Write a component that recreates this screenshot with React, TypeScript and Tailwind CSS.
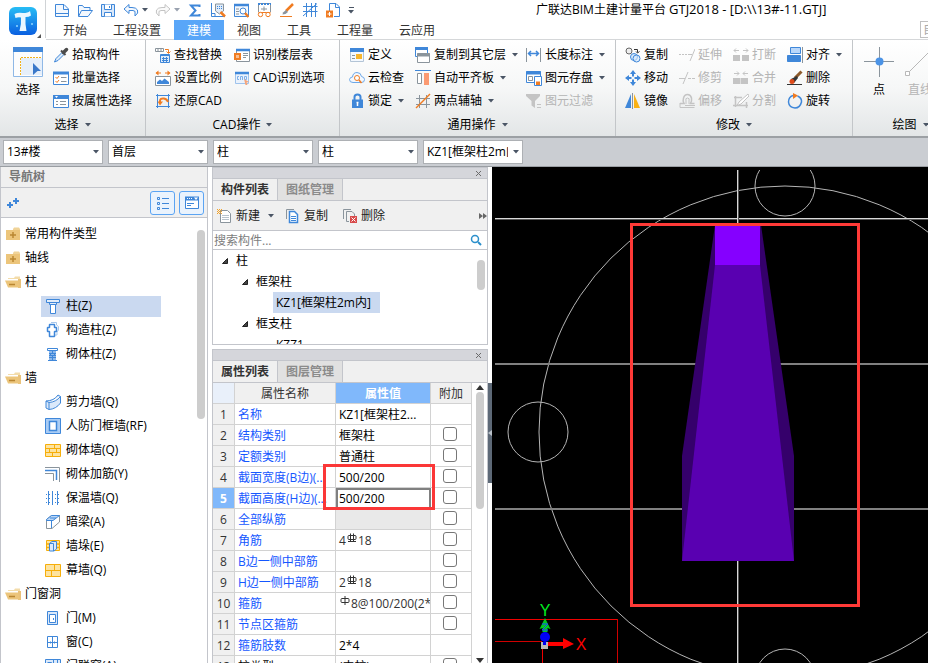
import React, { useState } from 'react';

const BLUE = '#3f87d9';
const ORANGE = '#f07c22';
const GRAY = '#8a949c';
const OFF = '#c4c4c4';

// 16px glyphs used by the ribbon, the quick access bar and the trees
const icons: Record<string, React.ReactNode> = {
  newFile: (
    <>
      <path d="M1.5 14.500V2.500H10L14.500 7V14.500Z" fill="#f3f8fe" stroke={BLUE} />
      <path d="M9.500 2.500V7.500H14.500M1 11.500H15" stroke={BLUE} fill="none" />
    </>
  ),
  open: (
    <path d="M1.500 14V3.500H5.500L7 5.500H13V8M1.500 14.500L4.500 8.500H15.500L11 14.500Z" fill="#f3f8fe" stroke={BLUE} />
  ),
  save: (
    <>
      <path d="M1.500 2.500H14.500V14.500H1.500Z" fill="#dbe9fa" stroke={BLUE} />
      <path d="M4.500 2.500V7.500H11.500V2.500M4.500 14.500V10.500H11.500V14.500M9.500 4V6" fill="#fff" stroke={BLUE} />
    </>
  ),
  undo: <path d="M6 2.500L1 7L6 11.500V8.500H10Q13 8.500 12 12V14Q16 11 14.500 8Q13 5.500 9 5.500H6Z" fill="#f3f8fe" stroke={BLUE} />,
  redo: <path d="M10 2.500L15 7L10 11.500V8.500H6Q3 8.500 4 12V14Q0 11 1.500 8Q3 5.500 7 5.500H10Z" fill="#fafafa" stroke={OFF} />,
  sum: <path d="M12.500 5V3.500H4L8.500 8.500L4 13.500H12.500V12" fill="none" stroke={BLUE} strokeWidth="2" />,
  measure: (
    <>
      <path d="M1.500 1V14.500H15M1 11.500H5V14" fill="none" stroke={BLUE} />
      <path d="M5.500 2H13.500V9L9.500 12L5.500 9Z" fill="#e1ecf9" stroke={GRAY} />
      <path d="M7 4.500H12.500M7 6.500H12.500" stroke={BLUE} strokeDasharray="1 1" />
      <path d="M10.500 10L15 14.500" stroke={ORANGE} strokeWidth="2.500" />
    </>
  ),
  findWindow: (
    <>
      <path d="M1.500 2.500H15.500V14.500H1.500Z" fill="#f3f8fe" stroke={BLUE} />
      <path d="M1 3H16" stroke={BLUE} strokeWidth="2.500" />
      <path d="M3 7H6M3 9.500H6M3 12H6" stroke={GRAY} />
      <circle cx="10" cy="9" r="3" fill="#fff" stroke={BLUE} />
      <path d="M12 11L15.500 15" stroke={ORANGE} strokeWidth="2.500" />
    </>
  ),
  glasses: (
    <>
      <path d="M2.500 1.500H14.500V10M2.500 1.500V10" fill="none" stroke={GRAY} />
      <path d="M2 2H15" stroke={BLUE} strokeWidth="2" strokeDasharray="2 1" />
      <path d="M5 7H11M8 4.500V9" stroke={GRAY} />
      <path d="M2.500 10.500H14.500" stroke={ORANGE} />
      <circle cx="4.500" cy="12.500" r="2.200" fill="#fff" stroke={ORANGE} />
      <circle cx="12" cy="12.500" r="2.200" fill="#fff" stroke={ORANGE} />
    </>
  ),
  brush: (
    <>
      <path d="M14 2L7 9" stroke={ORANGE} strokeWidth="2.500" />
      <path d="M7 8L4 10.500L3.500 12.500L6.500 12L9 10Z" fill={GRAY} />
      <path d="M1 14.500H13" stroke={ORANGE} />
    </>
  ),
  grid: (
    <path d="M1 4.500H15.500M1 9.500H15.500M4.500 1V15M9.500 1V15M13.500 1V15M1 14L15 1.500" stroke={BLUE} fill="none" />
  ),
  exportFile: (
    <>
      <path d="M4.500 9V1.500H11L14.500 5V14.500H9" fill="#fff" stroke={BLUE} />
      <path d="M10.500 1.500V5.500H14.500" fill="none" stroke={BLUE} />
      <path d="M1 8.500H8V15.500H1Z" fill={ORANGE} />
      <path d="M4.500 10V14M2.500 12H6.500" stroke="#fff" />
    </>
  ),
  dropper: (
    <>
      <path d="M9 5.500L3 11.500L1.500 15L5 13.500L11 7.500Z" fill="#dcecfb" stroke={BLUE} />
      <path d="M8 3.500L12.500 8" stroke="#4c4c4c" strokeWidth="2" />
      <path d="M10.500 5.500L13.500 2.500" stroke="#4c4c4c" strokeWidth="3.500" strokeLinecap="round" />
    </>
  ),
  batch: (
    <>
      <path d="M0.500 2.500H15.500V14.500H0.500Z" fill="#fff" stroke={BLUE} />
      <path d="M0 3H16" stroke={BLUE} strokeWidth="3" />
      <path d="M2.500 7L4 8.500L6 6M2.500 11L4 12.500L6 10" fill="none" stroke={ORANGE} />
      <path d="M8 7.500H13.500M8 11.500H13.500" stroke={GRAY} />
    </>
  ),
  byProp: (
    <>
      <path d="M0.500 2.500H15.500V14.500H0.500Z" fill="#fff" stroke={BLUE} />
      <path d="M0 4H16" stroke={BLUE} strokeWidth="4" />
      <path d="M2 3L3.500 5L5 3Z" fill="#fff" />
      <path d="M3 8.500H5M7 8.500H13M3 11.500H5M7 11.500H13" stroke={GRAY} />
    </>
  ),
  replace: (
    <>
      <path d="M0.500 1.500H8.500V4.500H0.500ZM3 1.500V4.500M6 1.500V4.500" fill="#fff" stroke={GRAY} />
      <path d="M10 2.500H13.500V6M11.500 4.500L13.500 6.500L15.500 4.500" fill="none" stroke={ORANGE} />
      <path d="M5.500 7.500H14.500V15.500H5.500Z" fill="#e1ecf9" stroke={BLUE} />
      <path d="M5 8.500H15M7 11.500H13M7 13.500H13M8.500 10V15M11.500 10V15" stroke={BLUE} />
    </>
  ),
  scale: (
    <>
      <path d="M1 3H6M10 3H15" stroke={ORANGE} />
      <path d="M3.500 0.500L0.500 3L3.500 5.500ZM12.500 0.500L15.500 3L12.500 5.500Z" fill={ORANGE} />
      <path d="M0.500 6.500H15.500V15.500H0.500Z" fill="#fff" stroke={GRAY} />
      <path d="M2 14V12L5 9.500L7 11L9.500 8.500L14 12V14Z" fill={BLUE} />
    </>
  ),
  restore: (
    <>
      <path d="M2.500 1V15M1 2.500H15M13.500 1V15M1 13.500H15" stroke={BLUE} fill="none" />
      <path d="M5 10V8Q5 5 9 5.500Q12 6 13 9" fill="none" stroke={ORANGE} strokeWidth="2" />
      <path d="M2.500 8.500H8L5 12.500Z" fill={ORANGE} />
    </>
  ),
  floorTable: (
    <>
      <path d="M2.500 2.500H15.500V14.500H2.500Z" fill="#fff" stroke={GRAY} />
      <path d="M2 3H16" stroke={BLUE} strokeWidth="2.500" />
      <path d="M9 6.500H14M9 8.500H14M9 10.500H12" stroke={GRAY} />
      <path d="M0 6H7V13H0Z" fill={ORANGE} />
      <path d="M2 8H5V11H2Z" fill="#fff" opacity=".5" />
    </>
  ),
  cadOption: (
    <>
      <path d="M1.500 2.500H14.500V13.500H1.500Z" fill="#eaf2fc" stroke="#9fc3ec" />
      <path d="M1 3H15" stroke={BLUE} strokeWidth="2.500" />
      <path d="M5 6.500H3.500V9.500H5M6.500 10V6.500H8.500V10M10.500 6.500V9.500H12.500V6.500Z" fill="none" stroke="#7fb0ea" />
      <path d="M10 9L15 12L12.500 12.500L13.500 15L11.500 15Z" fill="#f5a479" />
    </>
  ),
  define: (
    <>
      <path d="M1.500 1.500H14.500V14.500H1.500Z" fill="#f3f8fe" stroke="#b3c4d6" />
      <path d="M1 3H15" stroke={BLUE} strokeWidth="4" />
      <path d="M3 8.500H6M3 11.500H6" stroke={GRAY} />
      <path d="M7 7H13V12H7Z" fill="#f7b52c" />
    </>
  ),
  cloud: (
    <>
      <path d="M4 12.500Q0.500 12.500 0.500 9.500Q1 7 3.500 7Q4 2.500 8 2.500Q12 2.500 12.500 6.500Q15.500 7 15.500 9.500Q15.500 12.500 12.500 12.500Z" fill="#f3f8fe" stroke="#6ea8e8" />
      <circle cx="8" cy="8" r="2.500" fill="#fff" stroke={ORANGE} />
      <path d="M10 10L12.500 13" stroke={ORANGE} strokeWidth="1.500" />
    </>
  ),
  lock: (
    <>
      <path d="M5.500 7V4Q5.500 1.500 8.500 1.500Q11.500 1.500 11.500 4V7" fill="none" stroke={BLUE} strokeWidth="2" />
      <path d="M3 6.500H14V15H3Z" fill={BLUE} />
      <path d="M8.500 9V13M7.500 9.500H9.500" stroke="#fff" strokeWidth="1.500" />
    </>
  ),
  copyFloor: (
    <>
      <path d="M0.500 0.500H12.500V9.500H0.500Z" fill="#fff" stroke={BLUE} />
      <path d="M0 1.500H13" stroke={BLUE} strokeWidth="3" />
      <path d="M2.500 6.500H14.500V15.500H2.500Z" fill="#fff" stroke={GRAY} />
      <path d="M2 8H15" stroke={GRAY} strokeWidth="3" />
    </>
  ),
  alignSlab: (
    <>
      <path d="M0 0.500H16" stroke={BLUE} />
      <path d="M2.500 3.500H6.500V13.500H2.500Z" fill="#fff" stroke={GRAY} />
      <path d="M9 3H14V15H9Z" fill="#fb9a72" />
    </>
  ),
  axis: (
    <>
      <path d="M1 5.500H15M1 11.500H15M4.500 2V15M11.500 2V15" stroke={GRAY} />
      <path d="M1 15L15 1" stroke={ORANGE} strokeWidth="1.500" />
    </>
  ),
  dimension: (
    <>
      <path d="M0.500 1V15M14.500 1V15" stroke={GRAY} />
      <path d="M3 6.500H12M5 4L2.500 6.500L5 9M10 4L12.500 6.500L10 9" fill="none" stroke={BLUE} strokeWidth="1.500" />
    </>
  ),
  saveElement: (
    <>
      <path d="M0.500 1.500H14.500V12.500H0.500Z" fill="#fff" stroke={BLUE} />
      <path d="M0 3H15" stroke={BLUE} strokeWidth="3" />
      <path d="M2.500 6.500H6.500V10.500H2.500Z" fill="none" stroke={GRAY} />
      <path d="M8.500 6.500H15.500V15.500H8.500Z" fill="#fff" stroke={BLUE} />
      <path d="M10 11.500H14V15H10Z" fill={ORANGE} />
    </>
  ),
  filter: (
    <>
      <path d="M0 1H14V3L9 8V15L5.500 12.500V8L0 3Z" fill={OFF} />
      <path d="M11 11.500H15M11 14.500H15" stroke={OFF} />
    </>
  ),
  copy: (
    <>
      <circle cx="4" cy="4" r="3" fill="#eee" stroke="#666" />
      <path d="M9 2.500H12.500V5.500M11 4.500L12.500 6L14.500 4.500" fill="none" stroke="#333" />
      <circle cx="9" cy="10" r="3.500" fill="#d7e9fb" stroke={BLUE} />
      <circle cx="11.500" cy="11.500" r="3.500" fill="#d7e9fb" fillOpacity=".6" stroke={BLUE} />
    </>
  ),
  move: (
    <>
      <path d="M8 0L11 4H5ZM8 16L5 12H11ZM0 8L4 5V11ZM16 8L12 11V5Z" fill={BLUE} />
      <path d="M8 4V6.500M8 9.500V12M4 8H6.500M9.500 8H12" stroke={BLUE} strokeWidth="2" />
    </>
  ),
  mirror: (
    <>
      <path d="M6 1V15H0Z" fill={BLUE} />
      <path d="M9 1V15H15Z" fill="#f9b115" />
      <path d="M7.500 0V16" stroke={GRAY} />
    </>
  ),
  extend: (
    <>
      <path d="M0 7.500H9" stroke={OFF} strokeDasharray="2 1" />
      <path d="M9 7.500H13M16 2L11 14" stroke={OFF} />
    </>
  ),
  trim: (
    <>
      <path d="M0 8.500H6" stroke={OFF} />
      <path d="M9 8.500H16" stroke={OFF} strokeDasharray="3 1" />
      <path d="M9 2L4 14" stroke={OFF} />
    </>
  ),
  offset: (
    <>
      <path d="M1 10.500H5Q3.500 8 4.500 5Q5.500 1.500 8.500 1.500Q11.500 1.500 12.500 5Q13 8 11.500 10.500H15.500" fill="none" stroke={OFF} strokeWidth="1.500" />
      <path d="M1 10V14.500H15.500M6 12.500H16M7 11V8Q6 5 8.500 5Q11 5 10 8V11" fill="none" stroke={OFF} />
    </>
  ),
  breakUp: (
    <>
      <path d="M0 8H7V14H0ZM9 8H16V14H9Z" fill={OFF} />
      <path d="M1 3.500H6M3 1.500L1 3.500L3 5.500M10 3.500H15M13 1.500L15 3.500L13 5.500" fill="none" stroke={OFF} />
    </>
  ),
  merge: (
    <>
      <path d="M0 8H7.500V14H0ZM8 8H15V14H8Z" fill={OFF} />
      <path d="M1 3.500H6M4 1.500L6 3.500L4 5.500M10 3.500H15M12 1.500L10 3.500L12 5.500" fill="none" stroke={OFF} />
    </>
  ),
  split: (
    <>
      <path d="M1 4.500H9M2.500 3V14M0 12.500H15M13.500 9V15" fill="none" stroke={OFF} strokeWidth="1.500" />
      <path d="M15 1L6 9L4 12.500L8 11L16 3Z" fill="#fff" stroke={OFF} />
    </>
  ),
  align: (
    <>
      <path d="M3.500 0.500H13.500V6.500H3.500Z" fill="#b9d7fa" stroke={BLUE} />
      <path d="M0.500 8.500H13.500V14.500H0.500Z" fill={BLUE} stroke={BLUE} />
      <path d="M15.500 0V16" stroke={GRAY} />
    </>
  ),
  erase: (
    <>
      <path d="M14.500 1.500L8 8" stroke="#8d5a2b" strokeWidth="3" />
      <path d="M10 6L4 9L3 13H7L11 8Z" fill="#333" />
      <circle cx="5" cy="11.500" r="2.500" fill="#e04b1a" />
      <path d="M0 14.500H15" stroke="#333" />
    </>
  ),
  rotate: (
    <>
      <path d="M10.500 3Q15 5 14.500 9Q13 15 8 15Q2 14.500 1.500 9Q1.500 4 6 2.500" fill="none" stroke={BLUE} strokeWidth="1.500" />
      <path d="M6 0L11 2.500L6 6Z" fill={ORANGE} />
    </>
  ),
  column: (
    <>
      <path d="M1.500 1.500H14.500V4.500H1.500ZM4.500 4.500H11.500V6.500H4.500Z" fill="#e1ecf9" stroke={BLUE} />
      <path d="M5.500 6.500H10.500V15.500H5.500Z" fill="#fff" stroke={BLUE} />
    </>
  ),
  tieColumn: (
    <>
      <path d="M6 0.500H11.500V3L13.500 4.500V8L12 10V13H10" fill="none" stroke="#a8c8ec" />
      <path d="M4.500 2.500H9.500V5.500H11.500V9.500H9.500V14.500H4.500V9.500H2.500V5.500H4.500Z" fill="#fff" stroke={BLUE} strokeWidth="1.500" strokeLinejoin="bevel" />
    </>
  ),
  brickColumn: (
    <>
      <path d="M2.500 2.500H12.500V4.500H2.500Z" fill="#fff" stroke={BLUE} />
      <path d="M4 5H11V14H4Z" fill="#8db8ea" />
      <path d="M4 7.500H11M4 9.500H11M4 11.500H11M3 14.500H12M7.500 5V8M5.500 8V10M9.500 8V10M7.500 10V14" stroke={BLUE} />
    </>
  ),
  shearWall: (
    <path d="M1 7Q9 7 13 1L15.500 2.500V9Q11 15 4 15.500L1 14ZM1 7L4 8.500Q11 8 15.500 2.500M4 8.500V15.500" fill="#dbe9fa" stroke={BLUE} />
  ),
  frameWall: (
    <>
      <path d="M0.500 0.500H15.500V15.500H0.500Z" fill="#a9ccf5" stroke={BLUE} />
      <path d="M4.500 3.500H11.500V12.500H4.500Z" fill="#fff" stroke={BLUE} strokeWidth="1.500" />
    </>
  ),
  brickWall: (
    <>
      <path d="M0.500 2.500H15.500V14.500H0.500Z" fill="#fde3a0" stroke="#f6ae0a" />
      <path d="M0 6.500H16M0 10.500H16M9.500 2V6M4.500 6V10M11.500 6V10M7.500 10V15" stroke="#f6ae0a" />
    </>
  ),
  wallBar: (
    <>
      <path d="M0 1.500H14.500V16" fill="none" stroke={GRAY} />
      <path d="M0 4.500H11.500V14" fill="none" stroke={BLUE} strokeWidth="1.500" />
      <path d="M0 7.500H8.500V15" fill="none" stroke={GRAY} />
    </>
  ),
  insulation: (
    <>
      <path d="M3.500 1V15M7.500 1V15M12.500 1V15" stroke={BLUE} />
      <path d="M1 4.500H15M1 8.500H15M1 12.500H15" stroke={BLUE} strokeDasharray="1 2" />
    </>
  ),
  beam: (
    <>
      <path d="M1.500 5.500L6.500 1.500H14.500V8L7 14.500H1.500Z" fill="#fff" stroke={GRAY} />
      <path d="M1.500 5.500L6.500 1.500H14.500L8 6.500H1.500Z" fill="#bcd7f6" stroke={BLUE} />
      <path d="M6.500 7V14M5 4H11" stroke={BLUE} />
    </>
  ),
  pier: (
    <>
      <path d="M1.500 2.500H14.500V12.500H1.500Z" fill="#fde3a0" stroke="#f6ae0a" />
      <path d="M1 6H15M1 9.500H15" stroke="#f6ae0a" strokeWidth="1.500" />
      <path d="M4.500 5.500L7 3.500H11.500V11L9 13H4.500ZM4.500 5.500H8.500V13" fill="#dbe9fa" stroke={BLUE} />
    </>
  ),
  curtainWall: (
    <>
      <path d="M0.500 2.500H15.500V14.500H0.500Z" fill="#fde3a0" stroke="#f6ae0a" />
      <path d="M0 8.500H16M9.500 2V8M6.500 8V15" stroke="#f6ae0a" />
    </>
  ),
  door: (
    <>
      <path d="M2.500 1.500H12.500V14.500H2.500Z" fill="#dbe9fa" stroke={BLUE} />
      <path d="M4.500 4.500H10.500V12.500H4.500Z" fill="#fff" stroke={BLUE} />
      <path d="M8.500 8V10" stroke={BLUE} />
    </>
  ),
  window: (
    <path d="M2.500 2.500H12.500V13.500H2.500ZM7.500 2.500V13.500M2.500 8.500H12.500M5.500 7.500V9.500M9.500 7.500V9.500" fill="#fff" stroke={BLUE} />
  ),
  doorWindow: (
    <>
      <path d="M0.500 1.500H15.500V14.500H0.500Z" fill="#dbe9fa" stroke={BLUE} />
      <path d="M8.500 2V15M12.500 2V9M8 8.500H16M2.500 4.500H6.500V14" fill="none" stroke={BLUE} />
    </>
  ),
  newItem: (
    <>
      <path d="M3.500 2.500H10.500L13.500 5.500V14.500H3.500Z" fill="#fff" stroke={GRAY} />
      <path d="M5 7.500H12M5 9.500H12M5 11.500H12" stroke="#b9c3cc" />
      <path d="M0 1.500H5M0 3.500H5M0 5.500H5" stroke="#f2a32c" strokeDasharray="1 1" />
      <path d="M1 2.500H5M1 4.500H5" stroke="#f2a32c" strokeDasharray="1 1" />
    </>
  ),
  copyItem: (
    <>
      <path d="M1.500 11V1.500H9" fill="none" stroke={GRAY} />
      <path d="M4.500 3.500H9.500L12.500 6.500V14.500H4.500Z" fill="#fff" stroke={BLUE} strokeWidth="1.500" />
      <path d="M6 8.500H11M6 10.500H11M6 12.500H11" stroke={BLUE} />
    </>
  ),
  deleteItem: (
    <>
      <path d="M1.500 11V1.500H9M4.500 13.500V3.500H10L12.500 6V8M4.500 13.500H7" fill="none" stroke={GRAY} />
      <path d="M8 8H15V15H8Z" fill="#d84a4a" />
      <path d="M9.500 9.500L13.500 13.500M13.500 9.500L9.500 13.500" stroke="#fff" />
    </>
  ),
};

const Icon = ({ name }: { name: string }) => (
  <svg viewBox="0 0 16 16" className="w-4 h-4 shrink-0" aria-hidden="true">
    {icons[name]}
  </svg>
);

const Caret = ({ className = 'text-gray-600' }: { className?: string }) => (
  <svg viewBox="0 0 6 4" className={`w-[6px] h-1 shrink-0 ${className}`} aria-hidden="true">
    <path d="M0 0H6L3 3.500Z" fill="currentColor" />
  </svg>
);

interface Tool {
  icon: string;
  label: string;
  menu?: boolean;
  disabled?: boolean;
}

interface Column {
  width: string;
  tools: Tool[];
}

const ToolColumn = ({ width, tools }: Column) => (
  <div className={`flex flex-col shrink-0 ${width}`}>
    {tools.map((tool) => (
      <button
        key={tool.label}
        disabled={tool.disabled}
        className="flex items-center gap-[3px] h-[23px] whitespace-nowrap text-black disabled:text-[#b4b4b4]"
      >
        <Icon name={tool.icon} />
        <span>{tool.label}</span>
        {tool.menu && <span className="pl-[3px]"><Caret /></span>}
      </button>
    ))}
  </div>
);

interface GroupProps {
  title: string;
  width: string;
  children: React.ReactNode;
}

const Group = ({ title, width, children }: GroupProps) => (
  <section className={`flex flex-col shrink-0 pt-[3px] border-r border-[#c3c6c9] ${width}`}>
    <div className="flex h-[70px]">{children}</div>
    <button className="flex items-center justify-center gap-[6px] h-[23px] text-black">
      {title}
      <Caret className="text-gray-600" />
    </button>
  </section>
);

const cadColumns: Column[] = [
  {
    width: 'w-[79px]',
    tools: [
      { icon: 'replace', label: '查找替换' },
      { icon: 'scale', label: '设置比例' },
      { icon: 'restore', label: '还原CAD' },
    ],
  },
  {
    width: 'w-[100px]',
    tools: [
      { icon: 'floorTable', label: '识别楼层表' },
      { icon: 'cadOption', label: 'CAD识别选项' },
    ],
  },
];

const commonColumns: Column[] = [
  {
    width: 'w-[66px]',
    tools: [
      { icon: 'define', label: '定义' },
      { icon: 'cloud', label: '云检查' },
      { icon: 'lock', label: '锁定', menu: true },
    ],
  },
  {
    width: 'w-[111px]',
    tools: [
      { icon: 'copyFloor', label: '复制到其它层', menu: true },
      { icon: 'alignSlab', label: '自动平齐板', menu: true },
      { icon: 'axis', label: '两点辅轴', menu: true },
    ],
  },
  {
    width: 'w-[80px]',
    tools: [
      { icon: 'dimension', label: '长度标注', menu: true },
      { icon: 'saveElement', label: '图元存盘', menu: true },
      { icon: 'filter', label: '图元过滤', disabled: true },
    ],
  },
];

const modifyColumns: Column[] = [
  {
    width: 'w-[54px]',
    tools: [
      { icon: 'copy', label: '复制' },
      { icon: 'move', label: '移动' },
      { icon: 'mirror', label: '镜像' },
    ],
  },
  {
    width: 'w-[54px]',
    tools: [
      { icon: 'extend', label: '延伸', disabled: true },
      { icon: 'trim', label: '修剪', disabled: true },
      { icon: 'offset', label: '偏移', disabled: true },
    ],
  },
  {
    width: 'w-[54px]',
    tools: [
      { icon: 'breakUp', label: '打断', disabled: true },
      { icon: 'merge', label: '合并', disabled: true },
      { icon: 'split', label: '分割', disabled: true },
    ],
  },
  {
    width: 'w-[60px]',
    tools: [
      { icon: 'align', label: '对齐', menu: true },
      { icon: 'erase', label: '删除' },
      { icon: 'rotate', label: '旋转' },
    ],
  },
];

const tabs = ['开始', '工程设置', '建模', '视图', '工具', '工程量', '云应用'];

const Logo = () => (
  <svg viewBox="0 0 46 40" className="w-[46px] h-10 shrink-0" role="img" aria-label="GTJ2018">
    <defs>
      <linearGradient id="logo" x1="0" y1="0" x2="0" y2="1">
        <stop offset="0" stopColor="#27bdf5" />
        <stop offset="1" stopColor="#0a5fe0" />
      </linearGradient>
    </defs>
    <path d="M45.500 0V38" stroke="#d0d3d6" />
    <rect x="9" y="7" width="28" height="28" rx="6" fill="url(#logo)" />
    <path d="M14.500 14Q18 12 23 13Q28 13 30 11L31 15.500Q29 17 25.500 17Q25 24 26.500 31H19.500Q21.500 24 21 17.500Q18 17 15.500 18Z" fill="#eaf7ff" />
    <circle cx="17" cy="26" r="1" fill="#8fd6ff" />
    <circle cx="32" cy="24" r="1" fill="#8fd6ff" />
    <path d="M41 34V38H37Z" fill="#555" />
  </svg>
);

const QuickAccess = () => (
  <div className="flex items-center shrink-0 pl-2 w-[490px]">
    <div className="flex gap-[7px]">
      {['newFile', 'open', 'save', 'undo'].map((name) => (
        <button key={name} aria-label={name}><Icon name={name} /></button>
      ))}
    </div>
    <span className="pl-[3px] pr-[7px]"><Caret /></span>
    <button aria-label="redo"><Icon name="redo" /></button>
    <span className="pl-[3px] pr-[7px]"><Caret className="text-gray-400" /></span>
    <div className="flex gap-[7px]">
      {['sum', 'measure', 'findWindow', 'glasses', 'brush', 'grid', 'exportFile'].map((name) => (
        <button key={name} aria-label={name}><Icon name={name} /></button>
      ))}
    </div>
    <button className="flex flex-col items-center gap-[2px] pl-[7px]" aria-label="customize">
      <span className="w-[5px] h-px bg-gray-600" />
      <Caret />
    </button>
  </div>
);

const Ribbon = () => (
  <div className="flex h-[98px] overflow-hidden bg-linear-to-b from-white via-[#f6f7f7] to-[#e3e6e7] border-b-2 border-[#9ca0a4]">
    <Group title="选择" width="w-[146px]">
      <button className="flex flex-col items-center w-[53px] pt-1 pl-[3px] text-black">
        <svg viewBox="0 0 30 30" className="w-[30px] h-[30px]" aria-hidden="true">
          <path d="M0.500 0.500H29.500V29.500H0.500Z" fill="#fdfdfd" stroke="#8fb8e6" />
          <path d="M0 0H30V5H0Z" fill={BLUE} />
          <path d="M8 11H29V28H8Z" fill="#e6effa" />
          <path d="M7.500 28V10.500H29" fill="none" stroke="#f2b21b" strokeDasharray="2 1" />
          <path d="M20 16L28 24H24.500L20 28Z" fill="#3a78c9" />
        </svg>
        <span className="leading-4 pt-[5px]">选择</span>
      </button>
      <ToolColumn
        width="w-[90px]"
        tools={[
          { icon: 'dropper', label: '拾取构件' },
          { icon: 'batch', label: '批量选择' },
          { icon: 'byProp', label: '按属性选择' },
        ]}
      />
    </Group>
    <Group title="CAD操作" width="w-[194px]">
      <div className="flex pl-[9px]">
        {cadColumns.map((column, i) => <ToolColumn key={i} {...column} />)}
      </div>
    </Group>
    <Group title="通用操作" width="w-[276px]">
      <div className="flex pl-[9px]">
        {commonColumns.map((column, i) => <ToolColumn key={i} {...column} />)}
      </div>
    </Group>
    <Group title="修改" width="w-[237px]">
      <div className="flex pl-[9px]">
        {modifyColumns.map((column, i) => <ToolColumn key={i} {...column} />)}
      </div>
    </Group>
    <Group title="绘图" width="w-[116px]">
      <button className="flex flex-col items-center w-[52px] shrink-0 pt-1 text-black">
        <svg viewBox="0 0 30 30" className="w-[30px] h-[30px]" aria-hidden="true">
          <path d="M15.500 0V30M0 14.500H30" stroke={GRAY} />
          <circle cx="15.500" cy="14.500" r="4" fill="#4b93e6" />
        </svg>
        <span className="leading-4 pt-[5px]">点</span>
      </button>
      <button disabled className="flex flex-col items-center w-[30px] pt-1 text-[#b4b4b4] whitespace-nowrap">
        <svg viewBox="0 0 30 30" className="w-[30px] h-[30px]" aria-hidden="true">
          <path d="M4 25L29 0" stroke="#b8b8b8" />
          <path d="M0.500 24.500H4.500V28.500H0.500Z" fill="#fff" stroke="#b8b8b8" />
        </svg>
        <span className="leading-4 pt-[5px]">直线</span>
      </button>
    </Group>
  </div>
);

const selectors = [
  { label: '楼栋', value: '13#楼' },
  { label: '楼层', value: '首层' },
  { label: '构件分类', value: '柱' },
  { label: '构件类型', value: '柱' },
  { label: '构件', value: 'KZ1[框架柱2m内]' },
];

const SelectorBar = () => (
  <div className="flex items-center gap-[5px] h-[29px] pl-[3px] bg-[#cacdd2] border-b border-[#9a9ea3]">
    {selectors.map((item) => (
      <div key={item.label} className="relative w-[100px] shrink-0">
        <select
          aria-label={item.label}
          className="appearance-none w-full h-6 pl-[3px] pr-[14px] bg-white border border-[#adb0b4] text-black outline-none"
        >
          <option>{item.value}</option>
        </select>
        <span className="absolute right-1 top-[10px] pointer-events-none flex"><Caret /></span>
      </div>
    ))}
  </div>
);

interface NavNode {
  label: string;
  open?: boolean;
  children?: { icon: string; label: string }[];
}

const navTree: NavNode[] = [
  { label: '常用构件类型' },
  { label: '轴线' },
  {
    label: '柱',
    open: true,
    children: [
      { icon: 'column', label: '柱(Z)' },
      { icon: 'tieColumn', label: '构造柱(Z)' },
      { icon: 'brickColumn', label: '砌体柱(Z)' },
    ],
  },
  {
    label: '墙',
    open: true,
    children: [
      { icon: 'shearWall', label: '剪力墙(Q)' },
      { icon: 'frameWall', label: '人防门框墙(RF)' },
      { icon: 'brickWall', label: '砌体墙(Q)' },
      { icon: 'wallBar', label: '砌体加筋(Y)' },
      { icon: 'insulation', label: '保温墙(Q)' },
      { icon: 'beam', label: '暗梁(A)' },
      { icon: 'pier', label: '墙垛(E)' },
      { icon: 'curtainWall', label: '幕墙(Q)' },
    ],
  },
  {
    label: '门窗洞',
    open: true,
    children: [
      { icon: 'door', label: '门(M)' },
      { icon: 'window', label: '窗(C)' },
      { icon: 'doorWindow', label: '门联窗(A)' },
    ],
  },
];

const Folder = ({ open }: { open?: boolean }) => (
  <svg viewBox="0 0 16 16" className="w-4 h-4 shrink-0" aria-hidden="true">
    {open ? (
      <>
        <path d="M3 5V4H9L10 2.500H15V5Z" fill="#f3dcaa" />
        <path d="M13 5H16V14H13Z" fill="#e9c27a" />
        <path d="M1 5.500H13V7H1Z" fill="#fff" />
        <path d="M0 6.500H13L15 13.500H3Z" fill="#ecc57b" />
        <path d="M4 10.500H10" stroke="#b98632" strokeWidth="1.500" />
      </>
    ) : (
      <>
        <path d="M8 3L9 1.500H14L15 3V5H8Z" fill="#f0d398" />
        <path d="M1 4H15V14H1Z" fill="#ecc57b" />
        <path d="M5 9H11M8 6V12" stroke="#b98632" strokeWidth="1.500" />
      </>
    )}
  </svg>
);

const NavPanel = () => {
  const [selected, setSelected] = useState('柱(Z)');

  return (
    <aside className="flex flex-col w-[208px] shrink-0 border-x border-[#c3c5cb] bg-white overflow-hidden">
      <h2 className="h-[21px] leading-5 pl-2 bg-[#f0f0f0] border-b border-[#c3c5cb] text-[#777] font-bold shrink-0">
        导航树
      </h2>
      <div className="flex items-center justify-between h-[30px] pl-[6px] pr-[3px] bg-[#f0f0f0] border-b border-[#c3c5cb] shrink-0">
        <button aria-label="展开全部">
          <svg viewBox="0 0 12 12" className="w-3 h-3" aria-hidden="true">
            <path d="M0 8H6M3 5V11M6 4H12M9 1V7" stroke={BLUE} strokeWidth="2" />
          </svg>
        </button>
        <div className="flex gap-1">
          <button aria-label="列表" className="flex items-center justify-center w-[25px] h-6 border border-[#5ba4f3] rounded-[3px] bg-[#eaf3fd]">
            <svg viewBox="0 0 14 14" className="w-[14px] h-[14px]" aria-hidden="true">
              <path d="M1.500 1.500H3.500V3.500H1.500ZM1.500 6.500H3.500V8.500H1.500ZM1.500 11.500H3.500V13.500H1.500ZM6 2.500H13M6 7.500H13M6 12.500H13" fill="none" stroke={BLUE} />
            </svg>
          </button>
          <button aria-label="面板" className="flex items-center justify-center w-[25px] h-6 border border-[#5ba4f3] rounded-[3px] bg-[#eaf3fd]">
            <svg viewBox="0 0 16 14" className="w-4 h-[14px]" aria-hidden="true">
              <path d="M1.500 1.500H14.500V12.500H1.500Z" fill="#fff" stroke={BLUE} />
              <path d="M1 2.500H15" stroke={BLUE} strokeWidth="4" />
              <path d="M3 2.500H8" stroke="#fff" strokeDasharray="1 1" />
              <path d="M10 1.500H14L12 4Z" fill="#fff" />
              <path d="M3 7.500H10M3 9.500H7" stroke={BLUE} />
            </svg>
          </button>
        </div>
      </div>
      <div className="flex flex-1 min-h-0">
        <ul className="flex-1 pt-1 overflow-hidden">
          {navTree.map((node) => (
            <li key={node.label}>
              <div className="flex items-center gap-1 h-6 pl-1 text-black">
                <Folder open={node.open} />
                {node.label}
              </div>
              {node.children && (
                <ul className="pl-10">
                  {node.children.map((child) => (
                    <li key={child.label} className="flex items-center h-6">
                      <button
                        onClick={() => setSelected(child.label)}
                        className={`flex items-center gap-[5px] w-[120px] h-[21px] pl-1 whitespace-nowrap text-black ${
                          selected === child.label ? 'bg-[#cad9f0]' : ''
                        }`}
                      >
                        <Icon name={child.icon} />
                        {child.label}
                      </button>
                    </li>
                  ))}
                </ul>
              )}
            </li>
          ))}
        </ul>
        <div className="w-[10px] shrink-0 pt-3">
          <div className="w-2 h-[189px] rounded-full bg-[#cdcdcd]" />
        </div>
      </div>
    </aside>
  );
};

const DockBar = () => (
  <div className="flex items-center justify-end h-[11px] pr-[5px] bg-[#d5d6db] border-b border-[#c3c5cb] shrink-0">
    <button aria-label="关闭">
      <svg viewBox="0 0 7 7" className="w-[7px] h-[7px]" aria-hidden="true">
        <path d="M1 1L6 6M6 1L1 6" stroke="#6b6b6b" />
      </svg>
    </button>
  </div>
);

const PanelTabs = ({ labels }: { labels: string[] }) => (
  <div className="flex h-[22px] bg-[#f0f0f0] border-b border-[#c3c5cb] shrink-0">
    {labels.map((label, i) => (
      <button
        key={label}
        className={`w-[65px] font-bold border-r border-[#c3c5cb] ${
          i === 0 ? 'text-[#333] bg-[#f0f0f0]' : 'text-[#8b8b8b] bg-[#e1e1e1]'
        }`}
      >
        {label}
      </button>
    ))}
  </div>
);

const componentTree = [
  { label: '柱', pad: 'pl-2', branch: true },
  { label: '框架柱', pad: 'pl-[28px]', branch: true },
  { label: 'KZ1[框架柱2m内]', pad: 'pl-[60px]', active: true },
  { label: '框支柱', pad: 'pl-[28px]', branch: true },
  { label: 'KZZ1', pad: 'pl-[60px]' },
];

const ComponentPanel = () => (
  <section className="flex flex-col shrink-0 border border-[#c3c5cb] bg-white">
    <DockBar />
    <PanelTabs labels={['构件列表', '图纸管理']} />
    <div className="flex items-center h-[30px] pl-1 bg-[#f0f0f0] border-b border-[#c3c5cb] text-[#222]">
      <button className="flex items-center gap-[3px]">
        <Icon name="newItem" />
        新建
        <span className="pl-[5px]"><Caret /></span>
      </button>
      <button className="flex items-center gap-[3px] pl-[11px]">
        <Icon name="copyItem" />
        复制
      </button>
      <button className="flex items-center gap-[3px] pl-[14px]">
        <Icon name="deleteItem" />
        删除
      </button>
      <svg viewBox="0 0 8 6" className="w-2 h-[6px] ml-auto" aria-hidden="true">
        <path d="M0 0L4 3L0 6ZM4 0L8 3L4 6Z" fill="#666" />
      </svg>
    </div>
    <div className="flex items-center h-[19px] pl-px pr-[5px] border-b border-[#c3c5cb]">
      <input
        aria-label="搜索构件"
        placeholder="搜索构件..."
        className="flex-1 min-w-0 h-[18px] placeholder-[#7d7d7d] outline-none"
      />
      <svg viewBox="0 0 12 12" className="w-3 h-3" aria-hidden="true">
        <circle cx="5" cy="5" r="3.500" fill="#fff" stroke="#2b8fcb" strokeWidth="1.500" />
        <path d="M8 8L11 11" stroke="#2b8fcb" strokeWidth="2" />
      </svg>
    </div>
    <div className="flex h-[94px] overflow-hidden">
      <ul className="flex-1">
        {componentTree.map((node) => (
          <li key={node.label} className={`flex items-center h-[21px] text-black ${node.pad}`}>
            {node.branch && (
              <svg viewBox="0 0 8 8" className="w-2 h-2 mr-[7px]" aria-hidden="true">
                <path d="M6.500 1.500V6.500H1.500Z" fill="#444" stroke="#222" />
              </svg>
            )}
            <span className={node.active ? 'leading-[21px] pl-[3px] pr-[9px] bg-[#cad9f0]' : node.branch ? '' : 'pl-[3px]'}>
              {node.label}
            </span>
          </li>
        ))}
      </ul>
      <div className="w-[10px] pt-[10px]">
        <div className="w-2 h-[30px] rounded-full bg-[#cdcdcd]" />
      </div>
    </div>
  </section>
);

// Rebar grade sign; HRB grades have two inner bars and a foot
const Rebar = ({ ribbed }: { ribbed?: boolean }) => (
  <svg viewBox="0 0 10 10" className="inline-block align-top w-[10px] h-[10px] mt-px mx-px" aria-hidden="true">
    <rect x="1" y="2.500" width="8" height="4" rx="1" fill="none" stroke="#333" />
    {ribbed ? (
      <path d="M3.500 0.500V9M6.500 0.500V9M1 8.500H9" stroke="#333" />
    ) : (
      <path d="M5 0V9" stroke="#333" />
    )}
  </svg>
);

interface Property {
  name: string;
  value?: React.ReactNode;
  extra?: boolean;
  plain?: boolean;
}

const properties: Property[] = [
  { name: '名称', value: 'KZ1[框架柱2...' },
  { name: '结构类别', value: '框架柱', extra: true },
  { name: '定额类别', value: '普通柱', extra: true },
  { name: '截面宽度(B边)(...', value: '500/200', extra: true },
  { name: '截面高度(H边)(...', value: '500/200', extra: true },
  { name: '全部纵筋', extra: true },
  { name: '角筋', value: <>4<Rebar ribbed />18</>, extra: true },
  { name: 'B边一侧中部筋', extra: true },
  { name: 'H边一侧中部筋', value: <>2<Rebar ribbed />18</>, extra: true },
  { name: '箍筋', value: <><Rebar />8@100/200(2*4)</>, extra: true },
  { name: '节点区箍筋', extra: true },
  { name: '箍筋肢数', value: '2*4' },
  { name: '柱类型', value: '(中柱)', extra: true, plain: true },
];

const cell = 'h-[21px] p-0 pt-[2px] border-r border-b border-[#d2d2d2] overflow-hidden whitespace-nowrap';

const PropertyPanel = () => {
  const [current, setCurrent] = useState(4);

  return (
    <section className="flex flex-col flex-1 min-h-0 mt-1 border border-b-0 border-[#c3c5cb] bg-white overflow-hidden">
      <DockBar />
      <PanelTabs labels={['属性列表', '图层管理']} />
      <div className="relative flex flex-1 min-h-0">
        <div className="flex-1 min-w-0 overflow-hidden">
          <table className="table-fixed w-full border-separate border-spacing-0 leading-[18px]">
            <colgroup>
              <col className="w-[22px]" />
              <col />
              <col className="w-[95px]" />
              <col className="w-[41px]" />
            </colgroup>
            <thead>
              <tr className="text-[#333]">
                <th className={`${cell} bg-[#e9f0fa]`} aria-label="序号" />
                <th className={`${cell} font-normal bg-[#f0f0f0]`}>属性名称</th>
                <th className={`${cell} font-bold bg-[#80b8fb] text-white`}>属性值</th>
                <th className={`${cell} font-normal bg-[#f0f0f0]`}>附加</th>
              </tr>
            </thead>
            <tbody>
              {properties.map((row, i) => (
                <tr key={row.name} onClick={() => setCurrent(i)}>
                  <th
                    scope="row"
                    className={`${cell} ${i === current ? 'font-bold bg-[#80b8fb] text-white' : 'font-normal bg-[#f0f0f0] text-[#333]'}`}
                  >
                    {i + 1}
                  </th>
                  <td className={`${cell} pl-[3px] ${row.plain ? 'text-black' : 'text-[#1557ff]'}`}>{row.name}</td>
                  <td
                    className={`${cell} pl-[3px] ${row.name === '全部纵筋' ? 'bg-[#e9e9e9]' : ''} ${
                      i === current ? 'text-black outline-2 -outline-offset-2 outline-[#808080]' : i > 5 && i < 11 ? 'text-[#333]' : 'text-black'
                    }`}
                  >
                    {row.value}
                  </td>
                  <td className={`${cell} pr-[2px] text-center`}>
                    {row.extra && (
                      <input
                        type="checkbox"
                        aria-label={`${row.name} 附加`}
                        className="appearance-none align-top w-[14px] h-[14px] border border-[#777] rounded-[3px] bg-white checked:bg-[#80b8fb]"
                      />
                    )}
                  </td>
                </tr>
              ))}
            </tbody>
          </table>
        </div>
        <div className="flex flex-col items-center w-[15px] shrink-0 pt-[2px]">
          <svg viewBox="0 0 8 5" className="w-2 h-[5px]" aria-hidden="true">
            <path d="M4 0L8 5H0Z" fill="#333" />
          </svg>
          <div className="w-2 h-[117px] mt-[2px] rounded-full bg-[#cdcdcd]" />
          <svg viewBox="0 0 8 5" className="w-2 h-[5px] mt-auto" aria-hidden="true">
            <path d="M4 5L8 0H0Z" fill="#333" />
          </svg>
        </div>
        {/* highlight around the two section sizes */}
        <div className="absolute left-[110px] top-[81px] w-[112px] h-[46px] border-3 border-[#fb3737] pointer-events-none" />
      </div>
    </section>
  );
};

const Viewport = () => (
  <main className="flex-1 min-w-0 bg-black overflow-hidden">
    <svg viewBox="0 0 436 496" preserveAspectRatio="xMinYMin slice" className="w-full h-full" role="img" aria-label="三维视图">
      <defs>
        <clipPath id="view">
          <rect x="3" y="3" width="433" height="493" />
        </clipPath>
      </defs>
      <g clipPath="url(#view)">
        <g fill="none" stroke="#b5b5b5">
          <circle cx="293" cy="265" r="246" />
          <circle cx="293" cy="19" r="30" />
          <circle cx="46" cy="265" r="30" />
          <circle cx="293" cy="512" r="30" />
        </g>
        <g shapeRendering="crispEdges">
          <rect x="3" y="51" width="433" height="1" fill="#d8d8d8" />
          <rect x="3" y="52" width="433" height="1" fill="#555" />
          <rect x="3" y="196" width="433" height="2" fill="#808080" />
          <rect x="3" y="341" width="433" height="2" fill="#808080" />
          <rect x="245" y="3" width="1" height="493" fill="#d8d8d8" />
          <rect x="246" y="3" width="1" height="493" fill="#555" />
          <rect x="3" y="452" width="123" height="1" fill="#f00000" />
          <rect x="125" y="452" width="1" height="44" fill="#d00000" />
          <rect x="3" y="474" width="47" height="1" fill="#d00000" />
          <rect x="50" y="482" width="1" height="14" fill="#f00000" />
        </g>
        <path d="M223 58L190 289V394H302V289L269 58Z" fill="#35006b" />
        <path d="M223 98H268L302 394H190Z" fill="#5900b1" />
        <path d="M223 58H268V98H223Z" fill="#8500ff" />
        <rect x="139.500" y="57.500" width="227" height="381" fill="none" stroke="#ff3a37" strokeWidth="3" />
        <path d="M53 451L58.500 462L55.500 461V465H50.500V461L47.500 462Z" fill="#00c81c" />
        <path d="M56 475H71V471L82 477L71 482V479H56Z" fill="#ff0000" />
        <path d="M50 457H56L50 463H56" fill="none" stroke="#1c46ff" />
        <circle cx="53" cy="470" r="5" fill="#0000f5" />
        <path d="M49 475H56V482H49Z" fill="#b9b9b9" />
        <path d="M51 475H54V478H51Z" fill="#0000f5" />
        <text x="53" y="449" textAnchor="middle" className="font-['Liberation_Sans',sans-serif] text-base fill-[#00f020]">Y</text>
        <text x="89" y="483" textAnchor="middle" className="font-['Liberation_Sans',sans-serif] text-base fill-[#ff0000]">X</text>
      </g>
    </svg>
  </main>
);

const App = () => {
  const [activeTab, setActiveTab] = useState('建模');

  return (
    <div className="flex flex-col h-screen overflow-hidden bg-white text-xs font-['Open_Sans','Noto_Sans_CJK_SC',sans-serif]">
      <header className="flex h-10 shrink-0">
        <Logo />
        <div className="flex flex-col flex-1 min-w-0">
          <div className="flex items-center h-5">
            <QuickAccess />
            <h1 className="text-black whitespace-nowrap">
              广联达BIM土建计量平台 <span className="text-[13px]">GTJ2018 - [D:\\13#-11.GTJ]</span>
            </h1>
          </div>
          <nav className="flex h-5 pl-1 border-b border-[#d5d7d9]">
            {tabs.map((tab) => (
              <button
                key={tab}
                onClick={() => setActiveTab(tab)}
                className={`h-5 pt-px px-[13px] shrink-0 ${activeTab === tab ? 'bg-[#59a6f8] text-white' : 'text-[#333]'}`}
              >
                {tab}
              </button>
            ))}
            <div className="ml-auto w-2 overflow-hidden">
              <button className="h-[17px] mt-px w-[60px] pl-[2px] text-left leading-4 border border-[#c0c0c0] text-[#aaa]">自定义</button>
            </div>
          </nav>
        </div>
      </header>
      <Ribbon />
      <SelectorBar />
      <div className="flex flex-1 min-h-0">
        <NavPanel />
        <div className="flex flex-col w-[276px] shrink-0 ml-1">
          <ComponentPanel />
          <PropertyPanel />
        </div>
        <div className="w-1 shrink-0 pt-[216px]">
          <button aria-label="收起" className="flex items-center justify-center w-1 h-[100px] bg-[#5d6977]">
            <svg viewBox="0 0 4 6" className="w-1 h-[6px]" aria-hidden="true">
              <path d="M4 0V6L0 3Z" fill="#b9c1c9" />
            </svg>
          </button>
        </div>
        <Viewport />
      </div>
    </div>
  );
};

export default App;
